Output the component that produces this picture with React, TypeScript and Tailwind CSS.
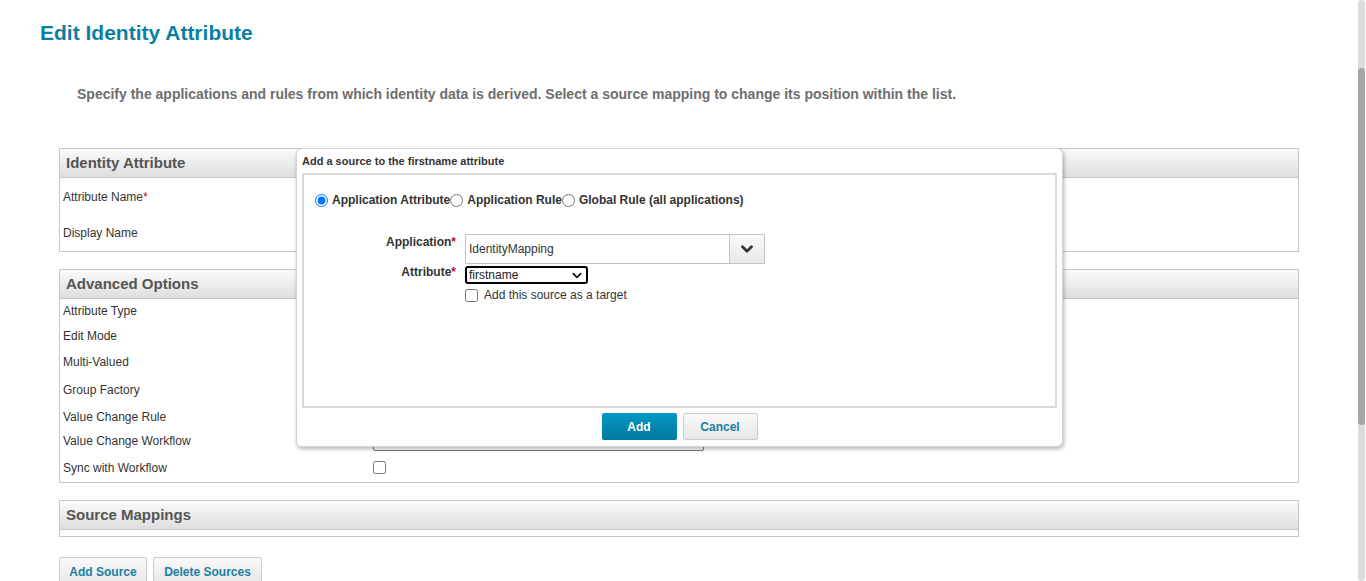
import React from "react";

const font = { fontFamily: '"Liberation Sans", Arial, sans-serif' };

function Panel({ title, children, bodyClass }: { title: string; children?: React.ReactNode; bodyClass?: string }) {
  return (
    <div className="border border-[#cac5c7] bg-white">
      <div className="h-[29px] flex items-center pl-[6px] bg-gradient-to-b from-[#fbfbfb] to-[#dedede] border-b border-[#cac5c7]">
        <span className="text-[15px] font-bold text-[#555555]">{title}</span>
      </div>
      <div className={bodyClass}>{children}</div>
    </div>
  );
}

function Row({ label, h, req, children }: { label: string; h: number; req?: boolean; children?: React.ReactNode }) {
  return (
    <div className="flex items-center text-[12px] text-[#333]" style={{ height: h }}>
      <div className="w-[313px] pl-[3px]">
        {label}
        {req && <span className="text-[#d0021b]">*</span>}
      </div>
      <div className="flex-1 flex items-center">{children}</div>
    </div>
  );
}

function Chevron({ className, w = 3 }: { className?: string; w?: number }) {
  return (
    <svg viewBox="0 0 16 10" className={className}>
      <path d="M2 2 L8 8 L14 2" fill="none" stroke="currentColor" strokeWidth={w} strokeLinecap="round" strokeLinejoin="round" />
    </svg>
  );
}

function Dialog() {
  return (
    <div className="absolute left-[296px] top-[148px] w-[767px] h-[299px] bg-white border border-[#d4d4d4] rounded-[6px] shadow-[1px_2px_4px_rgba(0,0,0,0.3)] flex flex-col px-[5px]">
      <div className="h-[24px] flex items-center text-[11px] font-bold text-[#333]">
        Add a source to the firstname attribute
      </div>
      <div className="h-[235px] border-2 border-[#d9d9d9] pt-[15px]">
        <div className="flex items-center text-[12px] font-bold text-[#333] pl-[11px] h-[20px]">
          <input type="radio" name="src" defaultChecked className="m-0 w-[13px] h-[13px] mr-[4px]" />
          <span>Application Attribute</span>
          <input type="radio" name="src" className="m-0 w-[13px] h-[13px] mr-[4px]" />
          <span>Application Rule</span>
          <input type="radio" name="src" className="m-0 w-[13px] h-[13px] mr-[4px]" />
          <span>Global Rule (all applications)</span>
        </div>
        <div className="mt-[24px] flex">
          <div className="w-[152px] text-right text-[12px] font-bold text-[#333] -mt-[1px]">
            Application<span className="text-[#d0021b]">*</span>
          </div>
          <div className="ml-[9px] w-[300px] h-[30px] border border-[#c4c4c4] flex">
            <div className="flex-1 flex items-center pl-[3px] text-[12px] text-[#333]">IdentityMapping</div>
            <div className="w-[35px] border-l border-[#c4c4c4] bg-gradient-to-b from-[#f9f9f9] to-[#e9e9e9] flex items-center justify-center text-[#333]">
              <Chevron className="w-[12px] h-[8px]" w={3.6} />
            </div>
          </div>
        </div>
        <div className="mt-[2px] flex">
          <div className="w-[152px] text-right text-[12px] font-bold text-[#333] -mt-[3px]">
            Attribute<span className="text-[#d0021b]">*</span>
          </div>
          <div className="ml-[9px] flex flex-col">
            <div className="w-[123px] h-[18px] border-2 border-black rounded-[3px] flex items-center justify-between pl-[2px] pr-[4px] text-[12px] text-[#222]">
              <span>firstname</span>
              <Chevron className="w-[10px] h-[7px] text-[#111]" w={2.6} />
            </div>
            <div className="flex items-center mt-[2px] text-[12px] text-[#333]">
              <input type="checkbox" className="m-0 w-[13px] h-[13px] mr-[6px]" />
              <span>Add this source as a target</span>
            </div>
          </div>
        </div>
      </div>
      <div className="flex justify-center gap-[6px] mt-[5px]">
        <button className="w-[75px] h-[27px] rounded-[2px] bg-gradient-to-b from-[#0099c7] to-[#00789e] text-white text-[12px] font-bold">
          Add
        </button>
        <button className="w-[75px] h-[27px] rounded-[2px] border border-[#cccccc] bg-gradient-to-b from-[#f9f9f9] to-[#e6e6e6] text-[#1a7fa3] text-[12px] font-bold">
          Cancel
        </button>
      </div>
    </div>
  );
}

export default function App() {
  return (
    <div className="w-[1366px] h-[581px] overflow-hidden flex bg-white" style={font}>
      <div className="relative flex-1 h-full">
        <div className="pt-[20px] pl-[40px]">
          <h1 className="text-[21px] leading-[26px] font-bold text-[#0b7fa2]">Edit Identity Attribute</h1>
        </div>
        <p className="mt-[38px] pl-[77px] text-[14px] leading-[20px] font-bold text-[#6e6e6e]">
          Specify the applications and rules from which identity data is derived. Select a source mapping to change its position within the list.
        </p>
        <div className="mx-[59px] mt-[44px] flex flex-col">
          <Panel title="Identity Attribute">
            <Row label="Attribute Name" req h={37} />
            <Row label="Display Name" h={36} />
          </Panel>
          <div className="h-[17px]" />
          <Panel title="Advanced Options">
            <Row label="Attribute Type" h={24} />
            <Row label="Edit Mode" h={25} />
            <Row label="Multi-Valued" h={27} />
            <Row label="Group Factory" h={29} />
            <Row label="Value Change Rule" h={25} />
            <Row label="Value Change Workflow" h={24}>
              <div className="w-[331px] h-[21px] border border-[#767676] rounded-[2px] -mt-[1px]" />
            </Row>
            <Row label="Sync with Workflow" h={29}>
              <input type="checkbox" className="m-0 w-[13px] h-[13px]" />
            </Row>
          </Panel>
          <div className="h-[17px]" />
          <Panel title="Source Mappings" bodyClass="h-[6px]" />
          <div className="flex gap-[6px] mt-[20px]">
            <button className="w-[88px] h-[30px] border border-[#cccccc] rounded-[2px] bg-gradient-to-b from-[#f9f9f9] to-[#e6e6e6] text-[#1a7fa3] text-[12px] font-bold">
              Add Source
            </button>
            <button className="w-[109px] h-[30px] border border-[#cccccc] rounded-[2px] bg-gradient-to-b from-[#f9f9f9] to-[#e6e6e6] text-[#1a7fa3] text-[12px] font-bold">
              Delete Sources
            </button>
          </div>
        </div>
        <Dialog />
      </div>
      <div className="w-[8px] h-full flex">
        <div className="w-[7px] h-full rounded-full bg-[#dcdce0] flex flex-col">
          <div className="h-[68px]" />
          <div className="h-[357px] w-[7px] rounded-full bg-[#a6a6a6]" />
        </div>
      </div>
    </div>
  );
}
